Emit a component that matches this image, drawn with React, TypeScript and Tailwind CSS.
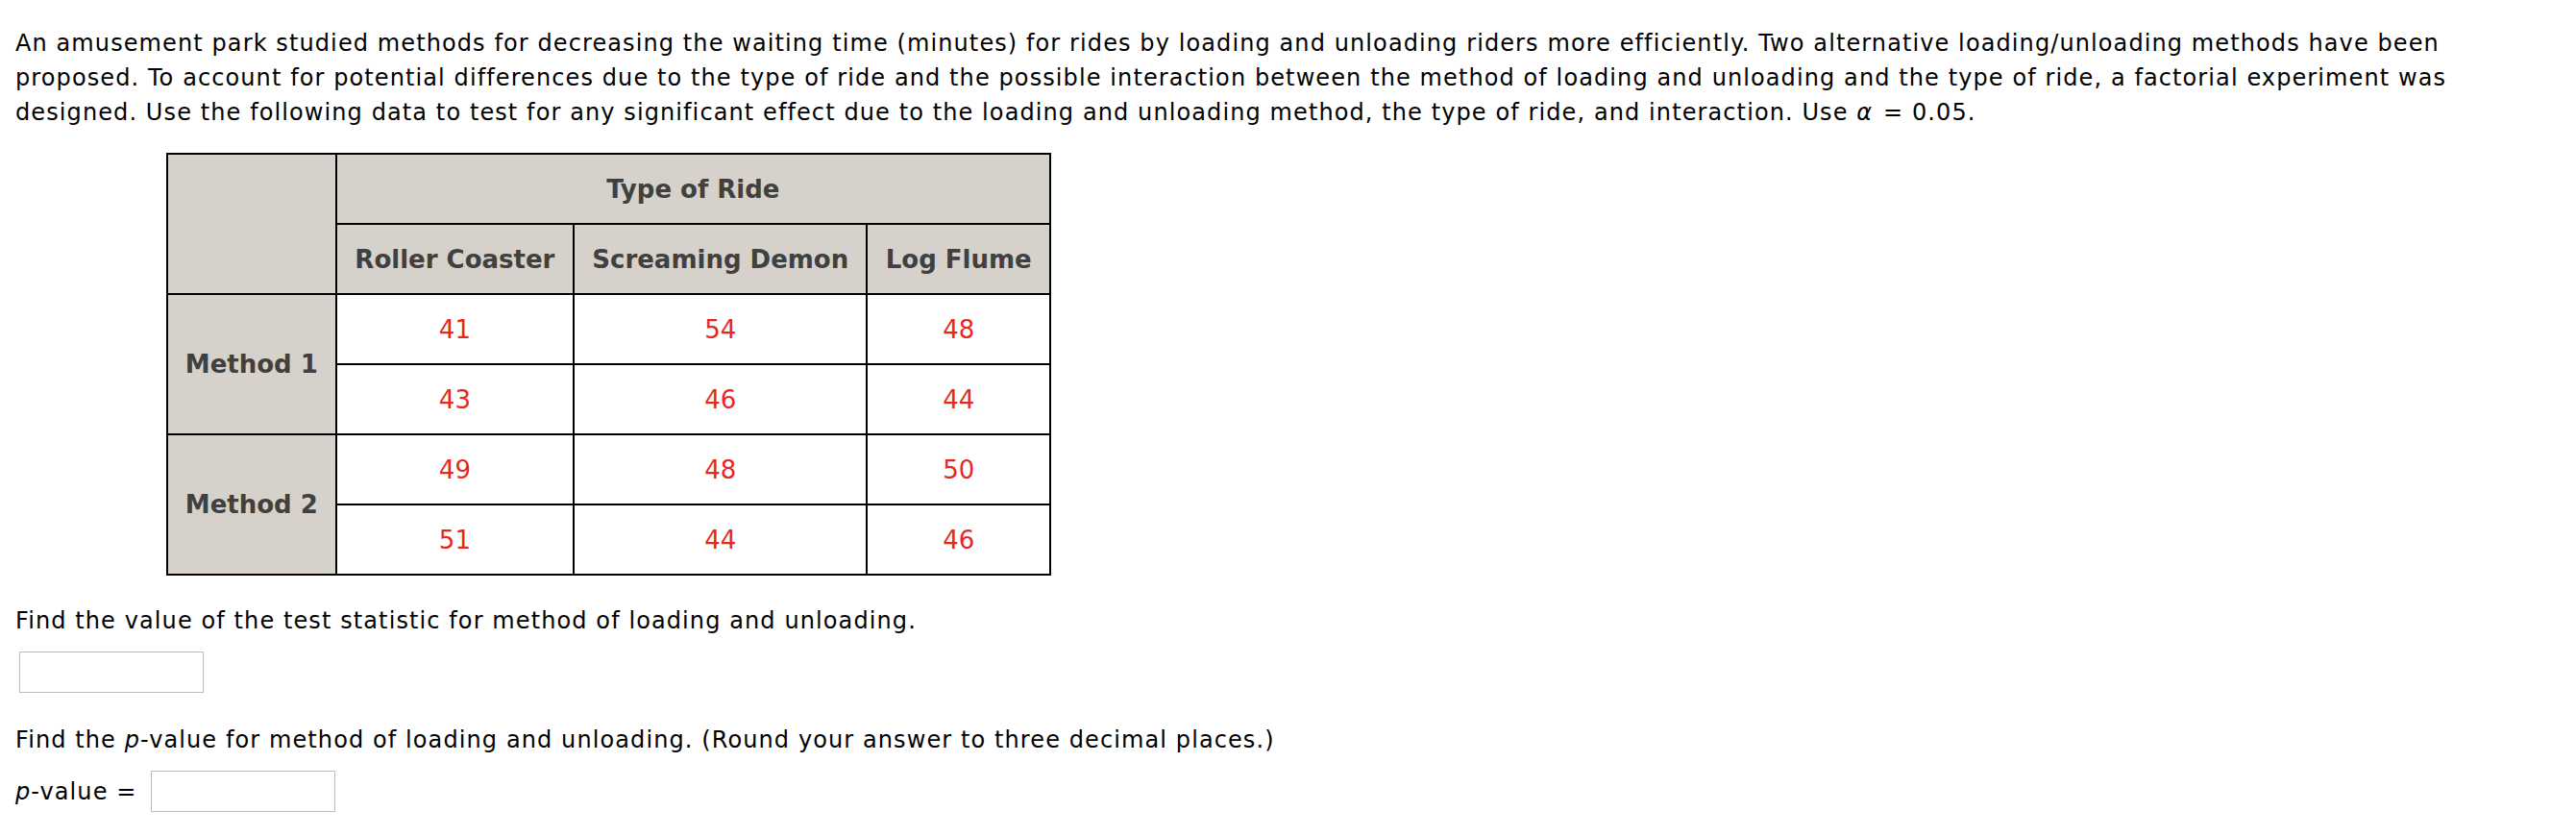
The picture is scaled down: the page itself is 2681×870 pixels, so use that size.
import React from "react";

const rows = [
  { label: "Method 1", data: [["41", "54", "48"], ["43", "46", "44"]] },
  { label: "Method 2", data: [["49", "48", "50"], ["51", "44", "46"]] },
];

const th = "border-2 border-black bg-[#d6d2cb] text-[#404040] font-bold h-[73px] text-center";
const td = "border-2 border-black bg-white text-[#e8281e] h-[73px] text-center";

export default function App() {
  return (
    <div className="min-h-screen bg-white pl-[16px] pt-[27px] text-black font-['DejaVu_Sans',Verdana,sans-serif] text-[24px] leading-[36px]">
      <p className="pr-[40px] tracking-[1.1px]">
        An amusement park studied methods for decreasing the waiting time (minutes) for rides by loading and unloading riders more efficiently. Two alternative loading/unloading methods have been proposed. To account for potential differences due to the type of ride and the possible interaction between the method of loading and unloading and the type of ride, a factorial experiment was designed. Use the following data to test for any significant effect due to the loading and unloading method, the type of ride, and interaction. Use{" "}
        <span className="italic pr-[2px]">α</span> = 0.05.
      </p>

      <table className="mt-[24px] ml-[157px] border-collapse border-2 border-black text-[26px] tracking-normal w-[921px]">
        <colgroup>
          <col className="w-[176px]" />
          <col className="w-[248px]" />
          <col className="w-[306px]" />
          <col className="w-[191px]" />
        </colgroup>
        <thead>
          <tr>
            <th rowSpan={2} className={th}></th>
            <th colSpan={3} className={th}>Type of Ride</th>
          </tr>
          <tr>
            <th className={th}>Roller Coaster</th>
            <th className={th}>Screaming Demon</th>
            <th className={th}>Log Flume</th>
          </tr>
        </thead>
        <tbody>
          {rows.map((r) =>
            r.data.map((vals, i) => (
              <tr key={r.label + i}>
                {i === 0 && (
                  <th rowSpan={2} className={th}>
                    {r.label}
                  </th>
                )}
                {vals.map((v, j) => (
                  <td key={j} className={td}>
                    {v}
                  </td>
                ))}
              </tr>
            ))
          )}
        </tbody>
      </table>

      <p className="mt-[29px] tracking-[1.1px]">Find the value of the test statistic for method of loading and unloading.</p>
      <div className="mt-[14px] ml-[4px] w-[192px] h-[43px] border border-[#bdbdbd]"></div>

      <p className="mt-[31px] tracking-[1.1px]">
        Find the <i>p</i>-value for method of loading and unloading. (Round your answer to three decimal places.)
      </p>
      <div className="mt-[14px] flex items-center">
        <span className="tracking-[1.1px] w-[141px]">
          <i>p</i>-value =
        </span>
        <div className="w-[192px] h-[43px] border border-[#bdbdbd]"></div>
      </div>
    </div>
  );
}
